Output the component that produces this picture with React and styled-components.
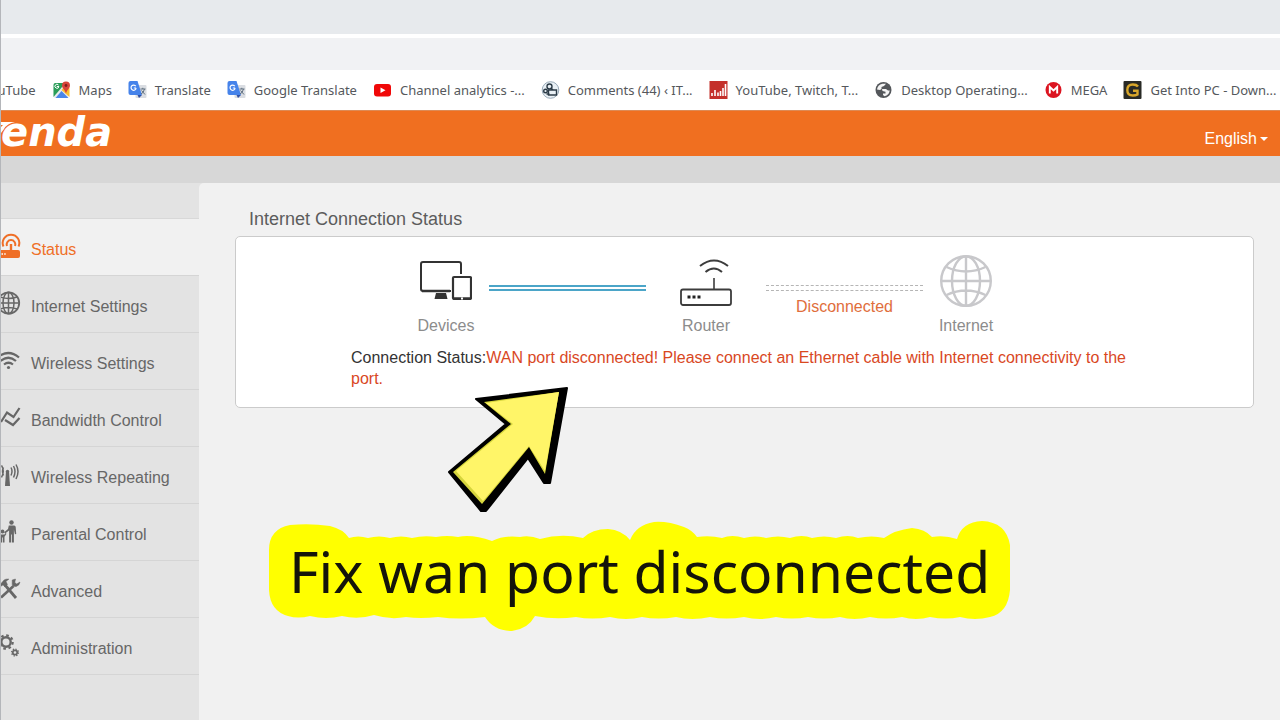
import styled, { createGlobalStyle } from 'styled-components';

const GlobalStyle = createGlobalStyle`
  * {
    box-sizing: border-box;
  }

  body {
    margin: 0;
    background: #f1f1f1;
    font-family: "Liberation Sans", Arial, sans-serif;
    font-size: 16px;
  }

  p, h1, ul {
    margin: 0;
    padding: 0;
  }
`;

const Page = styled.div`
  display: flex;
  flex-direction: column;
  min-height: 100vh;
  border-left: 1px solid #b4b6ba;
  overflow: hidden;
`;

const TabStrip = styled.div`
  height: 34px;
  background: #e7eaed;
`;

const AddressBar = styled.div`
  height: 36px;
  border-top: 4px solid #fff;
  background: #f1f2f4;
`;

const BookmarkBar = styled.nav`
  display: flex;
  align-items: center;
  gap: 16px;
  height: 40px;
  margin-left: -18px;
  background: #fff;
  white-space: nowrap;
`;

const Bookmark = styled.a`
  display: flex;
  flex-shrink: 0;
  align-items: center;
  gap: 8px;
  color: #55585c;
  font-family: "Noto Sans", "Open Sans", sans-serif;
  font-size: 13px;
  line-height: 20px;
  text-decoration: none;

  svg {
    width: 19px;
    height: 18px;
  }
`;

const Header = styled.header`
  display: flex;
  justify-content: space-between;
  height: 46px;
  padding-right: 12px;
  border-top: 1px solid #dd8a55;
  background: #f06f20;
`;

const Logo = styled.div`
  display: flex;
  align-items: flex-start;
  color: #fff;

  svg {
    width: 14px;
    height: 24px;
    margin-right: -14px;
  }

  span {
    font-family: "DejaVu Sans", sans-serif;
    font-size: 40px;
    font-style: italic;
    font-weight: bold;
    line-height: 42px;
  }
`;

const LanguageButton = styled.button`
  display: flex;
  align-items: center;
  gap: 3px;
  padding: 10px 0 0;
  border: 0;
  background: none;
  color: #fff;
  font-family: inherit;
  font-size: 16px;

  svg {
    width: 8px;
    height: 4px;
  }
`;

const SubHeader = styled.div`
  height: 27px;
  background: #d7d7d7;
`;

const Body = styled.div`
  display: flex;
  flex: 1;
  background: #e3e3e3;
`;

const Sidebar = styled.nav`
  flex: 0 0 198px;
  padding-top: 35px;

  ul {
    border-top: 1px solid #d8d8d8;
    list-style: none;
  }
`;

const MenuLink = styled.a`
  display: flex;
  align-items: center;
  gap: 10px;
  height: 57px;
  border-bottom: 1px solid #d5d5d5;
  background: ${({ $active }) => ($active ? '#f1f1f1' : 'transparent')};
  color: ${({ $active }) => ($active ? '#ef6f27' : '#676767')};
  text-decoration: none;

  svg {
    width: 20px;
    height: 28px;
  }

  span {
    padding-top: 6px;
  }
`;

const Main = styled.main`
  position: relative;
  flex: 1;
  padding: 25px 26px 25px 36px;
  border-radius: 5px 0 0 0;
  background: #f1f1f1;
`;

const Title = styled.h1`
  padding-left: 14px;
  color: #5c5c5c;
  font-size: 18px;
  font-weight: normal;
  line-height: 22px;
`;

const Card = styled.section`
  margin-top: 6px;
  padding: 18px 115px 18px;
  border: 1px solid #cbcbcb;
  border-radius: 5px;
  background: #fff;
`;

const Diagram = styled.div`
  display: flex;
  align-items: flex-start;
  padding-left: 69px;
`;

const Device = styled.div`
  display: flex;
  flex-direction: column;
  align-items: center;
  gap: 9px;
  width: 52px;
  margin: 0 ${({ $spaced }) => ($spaced ? '17px' : '0')};
  color: #8c8c8c;
  line-height: 20px;

  svg {
    width: 52px;
    height: 52px;
  }
`;

const Connection = styled.div`
  display: flex;
  flex-direction: column;
  gap: 6px;
  width: 157px;
  margin: 0 17px;
  padding-top: 30px;
  color: #e06e3c;
  line-height: 20px;
  text-align: center;
`;

const Cable = styled.div`
  height: 6px;
  border: ${({ $down }) => ($down ? '1px dashed #b5b5b5' : '2px solid #4ba5c8')};
  border-right: 0;
  border-left: 0;
`;

const StatusText = styled.p`
  margin-top: 11px;
  color: #333;
  line-height: 21px;

  strong {
    color: #d9481f;
    font-weight: normal;
  }
`;

const Arrow = styled.svg`
  position: absolute;
  top: 200px;
  left: 244px;
  width: 130px;
  height: 134px;
`;

const Caption = styled.div`
  position: absolute;
  top: 337px;
  left: 68px;
  width: 746px;
  padding: 11px 22px 18px;

  svg {
    position: absolute;
    top: 0;
    left: 0;
    width: 746px;
    height: 112px;
  }

  p {
    position: relative;
    color: #14140a;
    font-family: "Noto Sans", "Open Sans", sans-serif;
    font-size: 57px;
    line-height: 80px;
    white-space: nowrap;
  }
`;

const MapsIcon = () => (
  <svg viewBox="0 0 18 18">
    <rect x="1" y="2" width="15" height="15" rx="2" fill="#e8eaed" />
    <path d="M1 16V4q0-2 2-2h10L1 16z" fill="#2a9d58" />
    <path d="M9 9l8 7v-9l-4-3z" fill="#fbc02d" />
    <path d="M3 17l6-7 7 7z" fill="#4a86e8" />
    <path d="M13.5 .5a4 4 0 0 1 4 4c0 3-3 4-4 8-1-4-4-5-4-8a4 4 0 0 1 4-4z" fill="#d7443a" />
    <circle cx="13.5" cy="4.5" r="1.4" fill="#7d1f1b" />
    <path d="M6.5 5.5H4.3M6 4a2 2 0 1 0 .4 1.8" fill="none" stroke="#fff" />
  </svg>
);

const TranslateIcon = () => (
  <svg viewBox="0 0 18 18">
    <rect x="7" y="4" width="11" height="13" rx="1" fill="#dadde2" />
    <path d="M2 0h7l4.5 14H2q-2 0-2-2V2q0-2 2-2z" fill="#4683ea" />
    <path d="M9 14h4.5L10.5 17z" fill="#2f50a5" />
    <path d="M7.6 7H5.3M7.3 5.2a2.6 2.6 0 1 0 .4 2" fill="none" stroke="#fff" strokeWidth="1.2" />
    <path d="M12 8h5M14.3 6.8V8M16 8q-1 4-3.5 5M13 9.5l3.5 4" fill="none" stroke="#607080" />
  </svg>
);

const YoutubeIcon = () => (
  <svg viewBox="0 0 18 18">
    <rect x=".5" y="3" width="17" height="12.5" rx="3" fill="#f00808" />
    <path d="M7 6.6l5 2.6-5 2.7z" fill="#fff" />
  </svg>
);

const CommentsIcon = () => (
  <svg viewBox="0 0 18 18" fill="none" stroke="#2c3b47" strokeWidth="1.4">
    <circle cx="9" cy="9" r="8.3" fill="#e9f0f5" stroke="#98a9b8" strokeWidth="1" />
    <circle cx="8" cy="5.5" r="2.5" />
    <circle cx="4" cy="10" r="1.8" />
    <path d="M7 9h8v5H7zM5 13h3M9 7l3 2" />
  </svg>
);

const ChartIcon = () => (
  <svg viewBox="0 0 18 18">
    <rect width="18" height="18" fill="#c4302b" />
    <path d="M2.5 15v-3M5.5 15V9M8.5 15v-3.5M11 15v-5M13.5 15V7M16 15V3" stroke="#fff" strokeWidth="1.6" />
  </svg>
);

const EarthIcon = () => (
  <svg viewBox="0 0 18 18">
    <circle cx="9" cy="9" r="8" fill="#54575b" />
    <path d="M2.5 8.5Q3 4 8 2.8h3.5L9.5 5 7 6v2l-1.500 1zM7.5 8h4l2 1.5h1.8Q14.5 14 10 15.3L8.5 14v-1.500H11v-1.800L8 10z" fill="#f4f4f4" />
  </svg>
);

const MegaIcon = () => (
  <svg viewBox="0 0 18 18">
    <circle cx="9" cy="9" r="8" fill="#dc1420" />
    <path d="M5.3 12.5V6L9 9.5 12.7 6v6.5" fill="none" stroke="#fff" strokeWidth="1.9" />
  </svg>
);

const GetIntoIcon = () => (
  <svg viewBox="0 0 18 18">
    <rect width="18" height="18" rx="1" fill="#292a26" />
    <path d="M14.5 5.5Q13 3.5 9.3 3.5 3.8 3.5 3.8 9t5.5 5.5q3 0 4.7-1V9.8H9.5" fill="none" stroke="#d9a72b" strokeWidth="2.4" />
  </svg>
);

const StatusIcon = () => (
  <svg viewBox="1 0 20 28" fill="none" stroke="currentColor" strokeWidth="2">
    <path d="M3.5 13.5a8.3 8.3 0 1 1 15 0M7 13a4.3 4.3 0 1 1 8 0" />
    <path d="M11 11v7" strokeWidth="2.4" />
    <path d="M-2 17h20q2 0 2 2v4q0 2-2 2H-2z" fill="currentColor" stroke="none" />
    <path d="M1.5 21H3M4.200 21h1.5" stroke="#fff" strokeWidth="1.5" />
  </svg>
);

const SmallGlobeIcon = () => (
  <svg viewBox="1 0 20 28" fill="none" stroke="currentColor" strokeWidth="1.5">
    <circle cx="8.5" cy="13" r="10.7" strokeWidth="1.8" />
    <ellipse cx="8.5" cy="13" rx="5.5" ry="10.7" />
    <path d="M8.5 2v22M-2 13h21M0 7q8.5 3 17 0M0 19q8.5-3 17 0" />
  </svg>
);

const WifiIcon = () => (
  <svg viewBox="1 0 20 28" fill="none" stroke="currentColor" strokeWidth="2.2">
    <path d="M-3 10.500q11.500-9 22 0M.5 14q8-6.5 15.5 0M4 17.500q4.500-3.500 9 0" />
    <circle cx="8.5" cy="20.5" r="1.6" fill="currentColor" stroke="none" />
  </svg>
);

const BandwidthIcon = () => (
  <svg viewBox="1 0 20 28" fill="none" stroke="currentColor" strokeWidth="2.2">
    <path d="M1 18L7 8.500l6.500 4.500L19.500 4M5 16l8 5 6.500-7" />
  </svg>
);

const RepeatIcon = () => (
  <svg viewBox="1 0 20 28" fill="none" stroke="currentColor" strokeWidth="1.5">
    <path d="M6 10.500h3L10 25H5z" fill="currentColor" stroke="none" />
    <path d="M11 6.500q2 3.500 0 8M13.500 5q3 5.500 0 11.500M16 3.500q4 7 0 14.500M3.500 6.500q-2 3.500 0 8M1.500 4.500q3.500 5.500 0 12" />
    <circle cx="7.5" cy="10.5" r="1.7" fill="currentColor" stroke="none" />
  </svg>
);

const ParentIcon = () => (
  <svg viewBox="1 0 20 28" fill="currentColor">
    <circle cx="11.5" cy="4.5" r="2.2" />
    <path d="M8.800 7.500h5.400q1.300 0 1.500 1.500l.5 7-1.300.2-1-4.700V24.500h-2v-8h-.8v8h-2V12.500l-4 3-1-1.300L8 11z" />
    <circle cx="2.5" cy="13.5" r="1.9" />
    <path d="M0 16.500h4.500l1-1.500 1 .8-2 3v5.700H3v-5h-.8v5H0z" />
  </svg>
);

const ToolsIcon = () => (
  <svg viewBox="1 0 20 28" fill="none" stroke="currentColor">
    <path d="M1 22.500L13.500 11" strokeWidth="2.7" />
    <path d="M12.200 5v4.500q1 2.500 4 2 3.200-1 3.800-4.500l-3.300 2-1.900-1.500L15.500 4z" fill="currentColor" strokeWidth=".5" />
    <path d="M5 10l11 13" strokeWidth="2.8" />
    <path d="M0 9.500L4 5q2-1.500 5-1L6 6.500l1.500 3L5 12 3 10 0 12z" fill="currentColor" strokeWidth=".4" />
  </svg>
);

const GearsIcon = () => (
  <svg viewBox="1 0 20 28" fill="none" stroke="currentColor">
    <circle cx="6" cy="10" r="4.7" strokeWidth="2.4" />
    <circle cx="6" cy="10" r="6.7" strokeWidth="2.2" strokeDasharray="2.63" />
    <circle cx="15" cy="20.5" r="2.2" strokeWidth="1.7" />
    <circle cx="15" cy="20.5" r="3.4" strokeWidth="1.3" strokeDasharray="1.335" />
  </svg>
);

const ComputerIcon = () => (
  <svg viewBox="0 0 52 52" fill="none" stroke="#333" strokeWidth="2">
    <path d="M31 36H3q-2 0-2-2V9q0-2 2-2h36q2 0 2 2v10" />
    <path d="M2 36h28" strokeWidth="2.5" />
    <path d="M16 38h10l1.500 6h-13z" fill="#333" stroke="none" />
    <rect x="33" y="22" width="18" height="22" rx="1" strokeWidth="2.2" />
    <path d="M33 43.500h18" strokeWidth="2.5" />
    <path d="M41 43.500h2" stroke="#fff" />
  </svg>
);

const RouterIcon = () => (
  <svg viewBox="0 0 52 52" fill="none" stroke="#3c3c3c" strokeWidth="1.6">
    <rect x="1" y="34.5" width="50" height="15.5" rx="2" strokeWidth="1.8" />
    <path d="M34 23v11" />
    <path d="M20 11q14-11 28 0M25.500 17q8.500-7 16.500 0" strokeWidth="2" />
    <path d="M7.500 42h3M12.500 42h3M17.500 42h3" stroke="#222" strokeWidth="3" />
  </svg>
);

const GlobeIcon = () => (
  <svg viewBox="0 0 52 52" fill="none" stroke="#c8c8cb" strokeWidth="2.4">
    <circle cx="26" cy="26" r="24.8" />
    <ellipse cx="26" cy="26" rx="14" ry="24.8" />
    <path d="M26 1v50M1 26h50M6.500 12q19.500 9 39 0M6.500 40q19.500-9 39 0" />
  </svg>
);

const bookmarks = [
  { label: 'YouTube' },
  { label: 'Maps', icon: <MapsIcon /> },
  { label: 'Translate', icon: <TranslateIcon /> },
  { label: 'Google Translate', icon: <TranslateIcon /> },
  { label: 'Channel analytics -...', icon: <YoutubeIcon /> },
  { label: 'Comments (44) ‹ IT...', icon: <CommentsIcon /> },
  { label: 'YouTube, Twitch, T...', icon: <ChartIcon /> },
  { label: 'Desktop Operating...', icon: <EarthIcon /> },
  { label: 'MEGA', icon: <MegaIcon /> },
  { label: 'Get Into PC - Down...', icon: <GetIntoIcon /> },
];

const menu = [
  { label: 'Status', icon: <StatusIcon />, active: true },
  { label: 'Internet Settings', icon: <SmallGlobeIcon /> },
  { label: 'Wireless Settings', icon: <WifiIcon /> },
  { label: 'Bandwidth Control', icon: <BandwidthIcon /> },
  { label: 'Wireless Repeating', icon: <RepeatIcon /> },
  { label: 'Parental Control', icon: <ParentIcon /> },
  { label: 'Advanced', icon: <ToolsIcon /> },
  { label: 'Administration', icon: <GearsIcon /> },
];

const App = () => {
  return (
    <Page>
      <GlobalStyle />
      <TabStrip />
      <AddressBar />
      <BookmarkBar>
        {bookmarks.map(({ label, icon }) => (
          <Bookmark key={label} href='#'>
            {icon}
            {label}
          </Bookmark>
        ))}
      </BookmarkBar>

      <Header>
        <Logo>
          <svg viewBox="0 0 14 24">
            <path d="M0 11h14q-8 1.500-11 7l-3 4v-6l2-2H0z" fill="#fff" />
          </svg>
          <span>enda</span>
        </Logo>
        <LanguageButton type='button'>
          English
          <svg viewBox="0 0 8 4"><path d="M0 0h8L4 4z" fill="#fff" /></svg>
        </LanguageButton>
      </Header>
      <SubHeader />

      <Body>
        <Sidebar>
          <ul>
            {menu.map(({ label, icon, active }) => (
              <li key={label}>
                <MenuLink href='#' $active={active}>
                  {icon}
                  <span>{label}</span>
                </MenuLink>
              </li>
            ))}
          </ul>
        </Sidebar>

        <Main>
          <Title>Internet Connection Status</Title>
          <Card>
            <Diagram>
              <Device>
                <ComputerIcon />
                Devices
              </Device>
              <Connection>
                <Cable />
              </Connection>
              <Device $spaced>
                <RouterIcon />
                Router
              </Device>
              <Connection>
                <Cable $down />
                Disconnected
              </Connection>
              <Device>
                <GlobeIcon />
                Internet
              </Device>
            </Diagram>
            <StatusText>
              Connection Status:
              <strong>WAN port disconnected! Please connect an Ethernet cable with Internet connectivity to the port.</strong>
            </StatusText>
          </Card>

          <Arrow viewBox="443 383 130 134">
            <path
              d="M476 399L567 388 550 483h-6L528 458 486 511h-5L449 472 506 424z"
              fill="#000" stroke="#000" strokeWidth="2" strokeLinejoin="round"
            />
            <path d="M484 402L559 392 545 474 529 447 482 504 453 472 511 424z" fill="#d6d53c" />
            <path d="M486 403L559 392 545 471 529 446 483 501 456 471 513 424z" fill="#fff568" />
          </Arrow>

          <Caption>
            <svg viewBox="267 520 746 112">
              <path
                d="M269 550Q269 529 290 525Q310 523 330 526Q343 529 349 538Q358 535 368 538Q379 535 390 538
                Q401 535 412 538Q424 535 436 537Q447 535 458 537Q472 534 492 541Q504 535 520 537Q530 535 540 539
                Q561 533 583 538Q592 529 608 529Q622 530 630 540Q636 525 654 522Q668 521 684 527Q692 530 697 537
                Q710 535 722 538Q732 534 744 538Q755 535 766 538Q778 535 790 538Q802 534 812 538Q824 535 836 538
                Q848 534 858 538Q872 535 884 538Q895 530 912 528Q925 529 932 537Q945 535 957 539Q962 522 982 521
                Q1006 522 1010 545V590Q1008 613 990 617Q975 621 960 617Q946 620 930 617Q916 621 902 617
                Q886 620 870 617Q854 621 840 617Q824 620 808 617Q792 620 776 617Q760 621 744 617Q726 620 710 617
                Q692 621 676 617Q658 620 642 617Q626 621 610 617Q592 620 576 617Q555 620 535 616Q528 629 512 631
                Q494 631 485 617Q460 620 438 617Q420 619 406 617Q390 620 374 615Q358 620 342 616Q326 620 310 616
                Q298 619 288 616Q270 611 269 590z"
                fill="#ff0"
              />
            </svg>
            <p>Fix wan port disconnected</p>
          </Caption>
        </Main>
      </Body>
    </Page>
  );
};

export default App;
